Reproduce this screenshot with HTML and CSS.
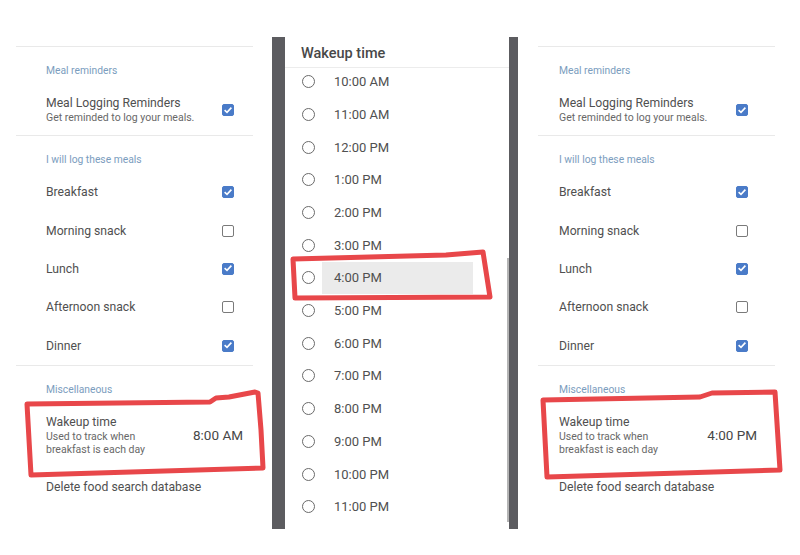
FILE: index.html
```html
<!DOCTYPE html>
<html lang="en">
	<head>
		<meta charset="UTF-8" />
		<meta name="viewport" content="width=device-width, initial-scale=1.0" />
		<title>Wakeup time</title>
		<link rel="stylesheet" href="styles.css">
	</head>
	<body>
		<div class="page">
			<!-- before -->
			<section class="settings settings-left">
				<div class="rule"></div>
				<div class="inner">
					<div class="section-title">Meal reminders</div>
					<div class="toggle">
						<div>
							<div class="title">Meal Logging Reminders</div>
							<div class="sub">Get reminded to log your meals.</div>
						</div>
						<span class="check on"><svg viewBox="0 0 12 12"><path d="M2.6 6.2 5 8.4 9.4 3.6" /></svg></span>
					</div>
				</div>
				<div class="rule"></div>
				<div class="inner">
					<div class="section-title">I will log these meals</div>
					<ul class="meals">
						<li><span>Breakfast</span><span class="check on"><svg viewBox="0 0 12 12"><path d="M2.6 6.2 5 8.4 9.4 3.6" /></svg></span></li>
						<li><span>Morning snack</span><span class="check"></span></li>
						<li><span>Lunch</span><span class="check on"><svg viewBox="0 0 12 12"><path d="M2.6 6.2 5 8.4 9.4 3.6" /></svg></span></li>
						<li><span>Afternoon snack</span><span class="check"></span></li>
						<li><span>Dinner</span><span class="check on"><svg viewBox="0 0 12 12"><path d="M2.6 6.2 5 8.4 9.4 3.6" /></svg></span></li>
					</ul>
				</div>
				<div class="rule"></div>
				<div class="inner">
					<div class="section-title">Miscellaneous</div>
					<div class="wakeup">
						<div>
							<div class="title">Wakeup time</div>
							<div class="sub sub-tight">Used to track when<br />breakfast is each day</div>
						</div>
						<span class="value">8:00 AM</span>
					</div>
					<div class="delete">Delete food search database</div>
				</div>
			</section>

			<!-- picker -->
			<div class="dialog">
				<div class="dialog-body">
					<h2>Wakeup time</h2>
					<div class="times">
						<ul>
							<li><span class="radio"></span><span class="label">10:00 AM</span></li>
							<li><span class="radio"></span><span class="label">11:00 AM</span></li>
							<li><span class="radio"></span><span class="label">12:00 PM</span></li>
							<li><span class="radio"></span><span class="label">1:00 PM</span></li>
							<li><span class="radio"></span><span class="label">2:00 PM</span></li>
							<li><span class="radio"></span><span class="label">3:00 PM</span></li>
							<li class="pressed"><span class="radio"></span><span class="label">4:00 PM</span></li>
							<li><span class="radio"></span><span class="label">5:00 PM</span></li>
							<li><span class="radio"></span><span class="label">6:00 PM</span></li>
							<li><span class="radio"></span><span class="label">7:00 PM</span></li>
							<li><span class="radio"></span><span class="label">8:00 PM</span></li>
							<li><span class="radio"></span><span class="label">9:00 PM</span></li>
							<li><span class="radio"></span><span class="label">10:00 PM</span></li>
							<li><span class="radio"></span><span class="label">11:00 PM</span></li>
						</ul>
					</div>
					<div class="thumb"></div>
				</div>
			</div>

			<!-- after -->
			<section class="settings settings-right">
				<div class="rule"></div>
				<div class="inner">
					<div class="section-title">Meal reminders</div>
					<div class="toggle">
						<div>
							<div class="title">Meal Logging Reminders</div>
							<div class="sub">Get reminded to log your meals.</div>
						</div>
						<span class="check on"><svg viewBox="0 0 12 12"><path d="M2.6 6.2 5 8.4 9.4 3.6" /></svg></span>
					</div>
				</div>
				<div class="rule"></div>
				<div class="inner">
					<div class="section-title">I will log these meals</div>
					<ul class="meals">
						<li><span>Breakfast</span><span class="check on"><svg viewBox="0 0 12 12"><path d="M2.6 6.2 5 8.4 9.4 3.6" /></svg></span></li>
						<li><span>Morning snack</span><span class="check"></span></li>
						<li><span>Lunch</span><span class="check on"><svg viewBox="0 0 12 12"><path d="M2.6 6.2 5 8.4 9.4 3.6" /></svg></span></li>
						<li><span>Afternoon snack</span><span class="check"></span></li>
						<li><span>Dinner</span><span class="check on"><svg viewBox="0 0 12 12"><path d="M2.6 6.2 5 8.4 9.4 3.6" /></svg></span></li>
					</ul>
				</div>
				<div class="rule"></div>
				<div class="inner">
					<div class="section-title">Miscellaneous</div>
					<div class="wakeup">
						<div>
							<div class="title">Wakeup time</div>
							<div class="sub sub-tight">Used to track when<br />breakfast is each day</div>
						</div>
						<span class="value">4:00 PM</span>
					</div>
					<div class="delete">Delete food search database</div>
				</div>
			</section>

			<!-- hand drawn marks over the screenshots -->
			<svg class="marks" viewBox="0 0 800 555">
				<path d="M27 404 L210 402 L216 398 L229 397 L255 392 L258 393 L261 430 L263 468 L31 475 Z" />
				<path d="M293 259 L446 255 L483 252 L490 297 L295 298 Z" />
				<path d="M543 400 L700 397 L712 393 L775 392 L780 470 L547 477 Z" />
			</svg>
		</div>
	</body>
</html>
```

FILE: styles.css
```css
body,
ul,
h2 {
	margin: 0;
	padding: 0;
	list-style: none;
}
body {
	background: #fff;
	font-family: Roboto, "Liberation Sans", sans-serif;
	color: #505050;
}
.page {
	position: relative;
	width: 800px;
	height: 555px;
	padding-left: 16px;
	box-sizing: border-box;
	display: flex;
	align-items: flex-start;
	overflow: hidden;
}

/* settings list */
.settings {
	width: 237px;
	padding-top: 46px;
	flex-shrink: 0;
}
.rule {
	border-top: 1px solid #e9e9e9;
}
.settings-left .inner {
	padding: 0 10px 0 30px;
}
.settings-right .inner {
	padding: 0 18px 0 21px;
}
.section-title {
	padding-top: 16px;
	line-height: 16px;
	font-size: 10.3px;
	color: #7b9dbe;
}
.title {
	font-size: 12.2px;
	line-height: 16px;
	color: #505050;
}
.sub {
	font-size: 10.5px;
	line-height: 14px;
	color: #686868;
}
.sub-tight {
	line-height: 13px;
}
.toggle {
	display: flex;
	align-items: center;
	justify-content: space-between;
	padding: 16px 0 10px;
}
.meals {
	padding-top: 5px;
}
.meals li {
	height: 38.4px;
	display: flex;
	align-items: center;
	justify-content: space-between;
	font-size: 12.2px;
	color: #505050;
}
.check {
	width: 12px;
	height: 12px;
	margin-right: 9px;
	border: 1.5px solid #7a7a7a;
	border-radius: 2px;
	box-sizing: border-box;
	display: inline-block;
}
.check.on {
	background: #4a7bc8;
	border-color: #4a7bc8;
}
.check svg {
	display: block;
	width: 12px;
	height: 12px;
	margin: -1.5px;
	fill: none;
	stroke: #fff;
	stroke-width: 1.6;
}
.wakeup {
	display: flex;
	align-items: center;
	justify-content: space-between;
	padding-top: 16px;
}
.value {
	font-size: 13.5px;
	color: #474747;
}
.delete {
	margin-top: 23px;
	line-height: 16px;
	font-size: 12.2px;
	color: #505050;
}

/* picker dialog */
.dialog {
	width: 246px;
	height: 492px;
	margin: 37px 20px 0 19px;
	border-left: 13px solid #5c5c60;
	border-right: 9px solid #5c5c60;
	box-sizing: border-box;
	flex-shrink: 0;
}
.dialog-body {
	position: relative;
	height: 100%;
	background: #fff;
	display: flex;
	flex-direction: column;
}
.dialog h2 {
	height: 31px;
	padding-top: 2px;
	line-height: 29px;
	padding-left: 16px;
	box-sizing: border-box;
	font-size: 14.5px;
	font-weight: 500;
	color: #484848;
	border-bottom: 1px solid #ececec;
}
.times {
	flex: 1;
	overflow: hidden;
}
.times ul {
	margin-top: -2.6px;
}
.times li {
	height: 32.7px;
	display: flex;
	align-items: center;
	font-size: 13px;
	color: #505050;
}
.radio {
	width: 13px;
	height: 13px;
	margin-left: 17px;
	border: 1.5px solid #6a6a6a;
	border-radius: 50%;
	box-sizing: border-box;
}
.label {
	width: 151px;
	height: 100%;
	margin-left: 7px;
	padding-left: 12px;
	box-sizing: border-box;
	display: flex;
	align-items: center;
}
.times li.pressed .label {
	background: #ebebeb;
}
.thumb {
	position: absolute;
	right: 0;
	top: 221px;
	width: 2px;
	height: 264px;
	background: #b5b5b5;
}

/* red marker */
.marks {
	position: absolute;
	left: 0;
	top: 0;
	width: 800px;
	height: 555px;
	pointer-events: none;
}
.marks path {
	fill: none;
	stroke: #e8474a;
	stroke-width: 5;
	stroke-linejoin: round;
	stroke-linecap: round;
}
```
